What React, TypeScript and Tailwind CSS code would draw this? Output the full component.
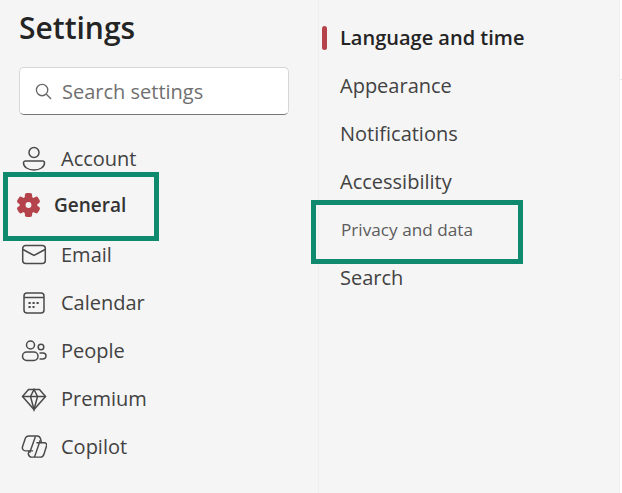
import type { ReactNode } from 'react'

const icon = 'w-[26px] h-[26px] fill-none stroke-[#4a4a4a] stroke-[1.5] ml-[2px]'

const NAV: { label: string; icon: ReactNode }[] = [
  {
    label: 'Email',
    icon: (
      <svg viewBox="0 0 26 26" className={icon}>
        <rect x="1.700" y="3.500" width="22.600" height="18" rx="3" />
        <path d="M2 7.500 13 13.500 24 7.500" />
      </svg>
    ),
  },
  {
    label: 'Calendar',
    icon: (
      <svg viewBox="0 0 26 26" className={icon}>
        <rect x="3" y="3" width="20" height="20" rx="3" />
        <path d="M3 7.500h20" />
        <path strokeWidth="2.200" strokeDasharray="2.200 1.800" d="M7.500 13h11M7.500 17h6" />
      </svg>
    ),
  },
  {
    label: 'People',
    icon: (
      <svg viewBox="0 0 26 26" className={icon}>
        <circle cx="9.500" cy="7" r="4" />
        <rect x="1.500" y="14" width="15.500" height="8.500" rx="4.200" />
        <circle cx="20" cy="9" r="2.800" />
        <path d="M18.500 15h3.500a2.600 2.600 0 0 1 0 6h-3.500" />
      </svg>
    ),
  },
  {
    label: 'Premium',
    icon: (
      <svg viewBox="0 0 26 26" className={icon}>
        <path d="M7.500 3.500h11L24.500 10.500 13 23.500 1.500 10.500Z" />
        <path d="M1.500 10.500h23M9.500 10.500 13 23.500 16.500 10.500 13 3.500 9.500 10.500" />
      </svg>
    ),
  },
  {
    label: 'Copilot',
    icon: (
      <svg viewBox="-0.500 0 27 26" className={icon}>
        <path d="M7.500 1.500h9c2 0 3 1.500 3.500 3.500l.7 3.500h3c1.800 0 2.800 1.500 2.300 3.500l-2.500 8c-.5 2-2 3.500-4 3.500h-9c-2 0-3-1.500-3.500-3.500L8 17H4c-2 0-3.500-2-3-4L4 4c.5-1.500 2-2.500 3.500-2.500Z" />
        <path d="M14.500 2 8.500 19M19.500 6l-6 17.500M8 17h4M20.500 8.500h-5" />
      </svg>
    ),
  },
]

const SUB = ['Appearance', 'Notifications', 'Accessibility']

export default function App() {
  return (
    <div className="w-[622px] h-[493px] bg-[#f5f5f5] flex font-['Open_Sans',sans-serif] text-[#424242] overflow-hidden">
      {/* Left rail */}
      <div className="w-[319px] shrink-0 border-r border-[#eeeeee] pl-[19px] pr-[30px] pt-[8px]">
        <h1 className="text-[30px] leading-[40px] font-semibold text-[#242424]">Settings</h1>
        <div className="mt-[19px] h-[48px] w-[270px] bg-white rounded-[5px] border border-[#d6d6d6] border-b-[#777777] flex items-center pl-[15px] gap-[10px]">
          <svg viewBox="0 0 18 18" className="w-[17px] h-[17px] fill-none stroke-[#666666] stroke-[1.400]">
            <circle cx="7.500" cy="7.500" r="6" />
            <path d="m12 12 5 5" />
          </svg>
          <span className="text-[20px] text-[#707070] pt-[2px]">Search settings</span>
        </div>

        <div className="mt-[20px] flex flex-col">
          <div className="h-[48px] flex items-center gap-[14px]">
            <svg viewBox="0 0 26 26" className={icon}>
              <circle cx="13" cy="6.500" r="5" />
              <path d="M4.500 15h17c1.200 0 2 .8 2 2 0 4-4.500 7-10.500 7S2.500 21 2.500 17c0-1.200.8-2 2-2Z" />
            </svg>
            <span className="text-[20px]">Account</span>
          </div>
          <div className="relative h-[48px] flex items-center -ml-[3px] pb-[4px] gap-[12px] text-[#333333]">
            <svg viewBox="0 0 24 24" className="w-[25px] h-[26px] fill-[#b5434c]">
              <circle cx="12" cy="12" r="8.500" />
              <rect x="8.500" y="0.500" width="7" height="23" rx="2" />
              <rect x="8.500" y="0.500" width="7" height="23" rx="2" transform="rotate(60 12 12)" />
              <rect x="8.500" y="0.500" width="7" height="23" rx="2" transform="rotate(120 12 12)" />
              <circle cx="12" cy="12" r="2.800" className="fill-[#f5f5f5]" />
            </svg>
            <span className="text-[19px] font-semibold ml-[1px]">General</span>
            <div className="absolute left-[-13px] top-[-11px] w-[156px] h-[69px] border-[5px] border-[#0f8a6e]" />
          </div>
          {NAV.map((n) => (
            <div key={n.label} className="h-[48px] flex items-center gap-[14px]">
              {n.icon}
              <span className="text-[20px]">{n.label}</span>
            </div>
          ))}
        </div>
      </div>

      {/* Sub menu */}
      <div className="flex-1 pt-[14px] pl-[3px]">
        <div className="flex flex-col">
          <div className="h-[48px] flex items-center">
            <div className="w-[5px] h-[24px] rounded-full bg-[#b5434c]" />
            <span className="ml-[13px] text-[20px] font-semibold text-[#242424]">Language and time</span>
          </div>
          {SUB.map((s) => (
            <div key={s} className="h-[48px] flex items-center pl-[18px] text-[20px]">{s}</div>
          ))}
          <div className="relative h-[48px] flex items-center pl-[19px] pb-[1px] text-[17.200px] text-[#5c5c5c]">
            Privacy and data
            <div className="absolute left-[-11px] top-[-6px] w-[212px] h-[64px] border-[5px] border-[#0f8a6e]" />
          </div>
          <div className="h-[48px] flex items-center pl-[18px] text-[20px]">Search</div>
        </div>
      </div>

      {/* Cropped edge of the next pane */}
      <div className="w-[3px] shrink-0 bg-white border-l border-[#eeeeee]">
        <div className="h-[80px] border-b border-[#e6e6e6]" />
      </div>
    </div>
  )
}
